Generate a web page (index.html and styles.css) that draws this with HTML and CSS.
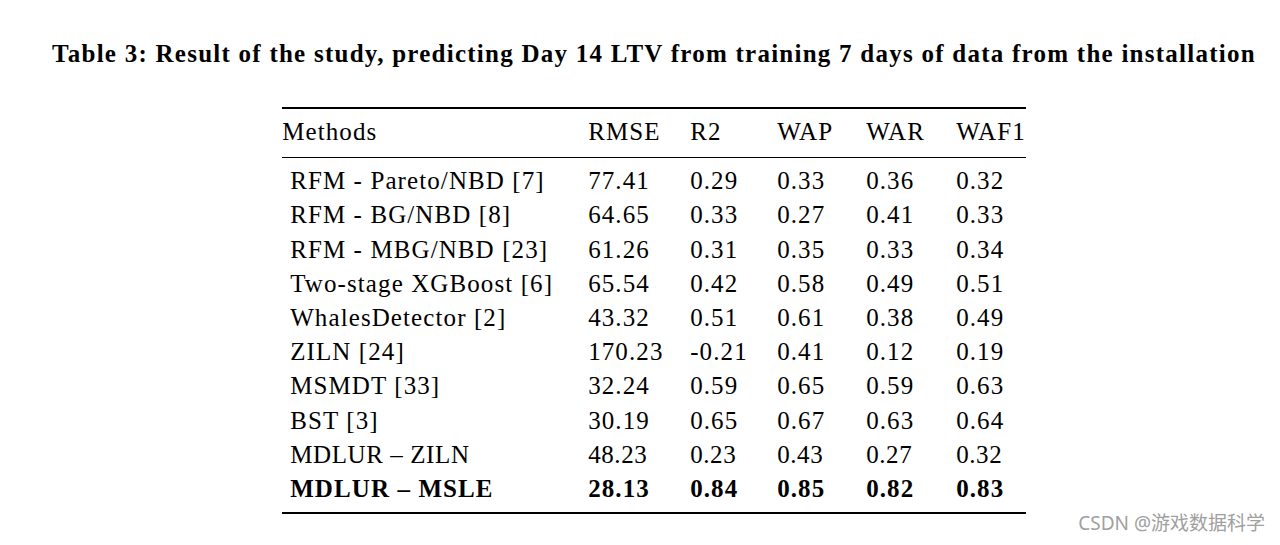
FILE: index.html
```html
<!DOCTYPE html>
<html>
<head>
<meta charset="utf-8">
<link rel="stylesheet" href="styles.css">
</head>
<body>
<div class="page">
  <h1 class="caption">Table 3: Result of the study, predicting Day 14 LTV from training 7 days of data from the installation</h1>
  <table class="results">
    <colgroup>
      <col class="c-method"><col class="c-rmse"><col class="c-r2"><col class="c-wap"><col class="c-war"><col class="c-waf1">
    </colgroup>
    <thead>
      <tr><th>Methods</th><th>RMSE</th><th>R2</th><th>WAP</th><th>WAR</th><th>WAF1</th></tr>
    </thead>
    <tbody>
      <tr class="first"><td>RFM - Pareto/NBD [7]</td><td>77.41</td><td>0.29</td><td>0.33</td><td>0.36</td><td>0.32</td></tr>
      <tr><td>RFM - BG/NBD [8]</td><td>64.65</td><td>0.33</td><td>0.27</td><td>0.41</td><td>0.33</td></tr>
      <tr><td>RFM - MBG/NBD [23]</td><td>61.26</td><td>0.31</td><td>0.35</td><td>0.33</td><td>0.34</td></tr>
      <tr><td>Two-stage XGBoost [6]</td><td>65.54</td><td>0.42</td><td>0.58</td><td>0.49</td><td>0.51</td></tr>
      <tr><td>WhalesDetector [2]</td><td>43.32</td><td>0.51</td><td>0.61</td><td>0.38</td><td>0.49</td></tr>
      <tr><td>ZILN [24]</td><td>170.23</td><td>-0.21</td><td>0.41</td><td>0.12</td><td>0.19</td></tr>
      <tr><td>MSMDT [33]</td><td>32.24</td><td>0.59</td><td>0.65</td><td>0.59</td><td>0.63</td></tr>
      <tr><td>BST [3]</td><td>30.19</td><td>0.65</td><td>0.67</td><td>0.63</td><td>0.64</td></tr>
      <tr class="narrow"><td>MDLUR – ZILN</td><td>48.23</td><td>0.23</td><td>0.43</td><td>0.27</td><td>0.32</td></tr>
      <tr class="best last"><td>MDLUR – MSLE</td><td>28.13</td><td>0.84</td><td>0.85</td><td>0.82</td><td>0.83</td></tr>
    </tbody>
  </table>
  <div class="watermark">CSDN @游戏数据科学</div>
</div>
</body>
</html>
```
FILE: styles.css
```css
html, body {
  margin: 0;
  padding: 0;
  background: #ffffff;
}
.page {
  position: relative;
  width: 1280px;
  height: 545px;
  padding-left: 28px;
  box-sizing: border-box;
  font-family: "Liberation Serif", "DejaVu Serif", serif;
  color: #000;
}
.caption {
  margin: 0;
  padding-top: 40px;
  font-size: 25px;
  line-height: 28px;
  font-weight: bold;
  letter-spacing: 1.25px;
  text-align: center;
  white-space: nowrap;
}
.results {
  margin: 39px auto 0;
  border-collapse: collapse;
  font-size: 25px;
  line-height: 34.2px;
  letter-spacing: 1.1px;
  border-top: 2px solid #000;
  border-bottom: 2px solid #000;
}
.c-method { width: 306px; }
.c-rmse { width: 102px; }
.c-r2 { width: 87px; }
.c-wap { width: 89px; }
.c-war { width: 90px; }
.c-waf1 { width: 69px; }
.results th {
  font-weight: normal;
  text-align: left;
  padding: 6px 0 8px;
  border-bottom: 1px solid #000;
  white-space: nowrap;
}
.results td {
  padding: 0;
  text-align: left;
  white-space: nowrap;
}
.results td:first-child {
  padding-left: 8px;
}
.results tr.first td {
  padding-top: 6px;
}
.results tr.last td {
  padding-bottom: 6px;
}
.results tr.narrow td {
  letter-spacing: 0.6px;
}
.results tr.best td {
  font-weight: bold;
}
.watermark {
  position: absolute;
  right: 15px;
  bottom: 9px;
  font-family: "Noto Sans", "Noto Sans CJK SC", sans-serif;
  font-size: 19px;
  color: #a0a0a0;
  white-space: nowrap;
}
```
